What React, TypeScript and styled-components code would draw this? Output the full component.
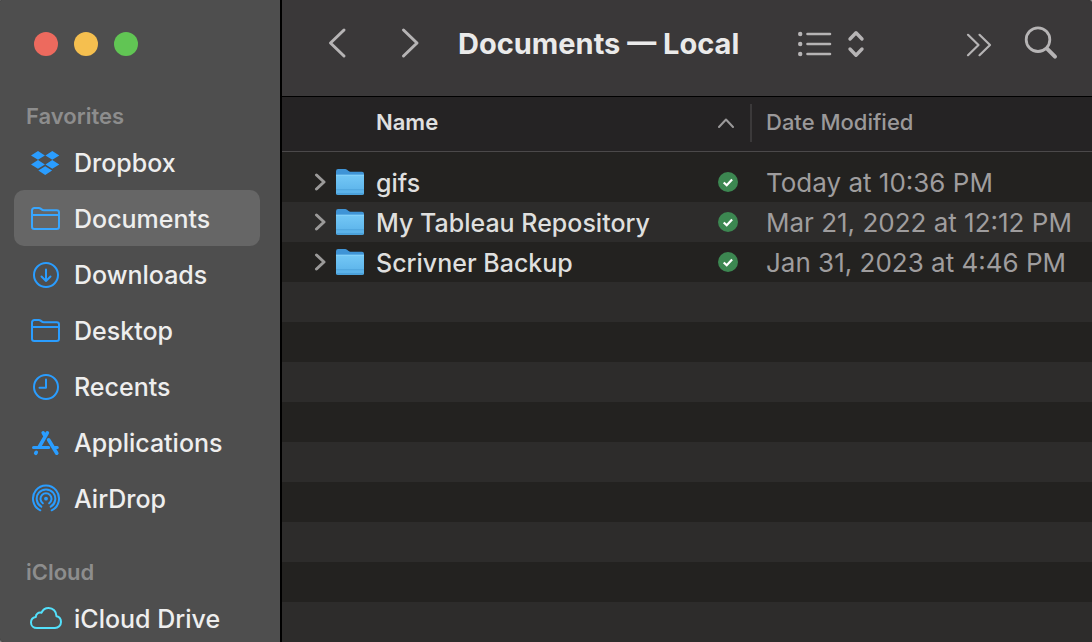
import React from "react";
import styled, { createGlobalStyle } from "styled-components";

const GlobalStyle = createGlobalStyle`
  *, *::before, *::after { box-sizing: border-box; }
  body {
    margin: 0;
    background: #858585;
    font-family: Inter, "Liberation Sans", sans-serif;
    -webkit-font-smoothing: antialiased;
  }
`;

const Window = styled.div`
  display: flex;
  height: 100vh;
  overflow: hidden;
  border-radius: 2px 4px 0 4px;
  background: #232220;
`;

/* Sidebar */

const Sidebar = styled.aside`
  flex: none;
  width: 282px;
  border-right: 2px solid #000;
  background: #4e4e4e;
  overflow: hidden;
`;

const WindowControls = styled.div`
  display: flex;
  gap: 16px;
  padding: 32px 34px;
  height: 98px;
`;

const WindowControl = styled.button<{ $color: string }>`
  width: 24px;
  height: 24px;
  padding: 0;
  border: 0;
  border-radius: 50%;
  background: ${(p) => p.$color};
`;

const Section = styled.section`
  margin-bottom: 28px;
`;

const SectionTitle = styled.h2`
  margin: 0;
  padding-left: 26px;
  font-size: 22px;
  font-weight: 600;
  line-height: 36px;
  color: #8d8d8d;
`;

const PlaceList = styled.ul`
  margin: 0;
  padding: 0 20px 0 14px;
  list-style: none;
`;

const PlaceLink = styled.a<{ $selected: boolean }>`
  display: flex;
  align-items: center;
  gap: 12px;
  height: 56px;
  padding-left: 16px;
  border-radius: 10px;
  background: ${(p) => (p.$selected ? "#666666" : "transparent")};
  color: #eeeeee;
  font-size: 25px;
  font-weight: 500;
  line-height: 32px;
  text-decoration: none;
  white-space: nowrap;
`;

const PlaceName = styled.span`
  padding-top: 2px;
`;

const PlaceIcon = styled.svg<{ $color: string }>`
  flex: none;
  width: 32px;
  height: 32px;
  fill: none;
  color: ${(p) => p.$color};
  stroke: currentColor;
  stroke-width: 2;
  stroke-linecap: round;
  stroke-linejoin: round;
`;

/* Main pane */

const Main = styled.main`
  display: flex;
  flex-direction: column;
  flex: 1;
  min-width: 0;
`;

const Toolbar = styled.header`
  display: flex;
  flex: none;
  align-items: center;
  height: 97px;
  padding: 0 32px 10px 42px;
  border-bottom: 1px solid #000;
  background: #3a3839;
`;

const Navigation = styled.div`
  display: flex;
  gap: 46px;
  margin-right: 32px;
`;

const ToolButton = styled.button`
  display: block;
  padding: 0;
  border: 0;
  background: none;
  color: #b6b4b5;
`;

const Glyph = styled.svg<{ $weight: number }>`
  display: block;
  fill: none;
  stroke: currentColor;
  stroke-width: ${(p) => p.$weight};
  stroke-linecap: round;
  stroke-linejoin: round;
`;

const Title = styled.h1`
  flex: 1;
  margin: 0;
  padding-top: 2px;
  color: #eaeaea;
  font-size: 29px;
  font-weight: 700;
  line-height: 36px;
  white-space: nowrap;
`;

const ViewTools = styled.div`
  display: flex;
  margin-right: 98px;
`;

const EndTools = styled.div`
  display: flex;
  align-items: center;
  gap: 30px;
`;

const ListArea = styled.div`
  flex: 1;
  min-height: 0;
  overflow: hidden;
  background: repeating-linear-gradient(
      #232220 0 40px,
      #2d2c2b 40px 80px
    )
    0 65px;
`;

const FileTable = styled.table`
  width: 100%;
  border-collapse: collapse;
  table-layout: fixed;
`;

const DateColumn = styled.col`
  width: 340px;
`;

const HeadRow = styled.tr`
  height: 54px;
  border-bottom: 1px solid #4b494a;
  background: #252324;
`;

const HeadCell = styled.th`
  padding: 0 0 2px;
  text-align: left;
  font-weight: 400;
`;

const HeadButton = styled.button<{ $sorted?: boolean }>`
  display: flex;
  align-items: center;
  justify-content: space-between;
  width: 100%;
  height: 38px;
  padding: ${(p) => (p.$sorted ? "0 16px 2px 94px" : "0 0 2px 14px")};
  border: 0;
  border-right: ${(p) => (p.$sorted ? "2px solid #3b393a" : "0")};
  background: none;
  color: ${(p) => (p.$sorted ? "#e0e0e0" : "#9b999a")};
  font: inherit;
  font-size: 22px;
  font-weight: ${(p) => (p.$sorted ? 600 : 500)};
  line-height: 28px;
  text-align: left;
`;

const SortMark = styled(Glyph)`
  color: #9b999a;
`;

const Spacer = styled.tr`
  height: 11px;
  background: #232220;
`;

const SpacerCell = styled.td`
  padding: 0;
`;

const FileRow = styled.tr`
  height: 40px;
  color: #dfdfde;
  font-size: 25px;
  font-weight: 500;
  line-height: 32px;
  white-space: nowrap;

  &:nth-child(even) { background: #232220; }
  &:nth-child(odd) { background: #2d2c2b; }
`;

const Cell = styled.td`
  padding: 0;
`;

const DateCell = styled(Cell)`
  padding: 2px 0 0 14px;
  color: #9f9d9e;
  font-size: 26px;
  font-weight: 400;
`;

const NameContent = styled.div`
  display: flex;
  align-items: center;
  gap: 10px;
  padding: 0 14px 0 32px;
`;

const DisclosureButton = styled(ToolButton)`
  color: #9b9a99;
`;

const FileName = styled.span`
  flex: 1;
  padding: 2px 0 0 2px;
  overflow: hidden;
  text-overflow: ellipsis;
`;

const BLUE = "#2a9dff";
const CYAN = "#53e0fb";

const folderOutline = (
  <path d="M2 8.3A2.3 2.3 0 0 1 4.3 6h4.5c.8 0 1.3.2 1.8.6l1.3 1c.5.4 1 .6 1.8.6h13A2.3 2.3 0 0 1 29 10.5v14.2a2.3 2.3 0 0 1-2.3 2.3H4.3A2.3 2.3 0 0 1 2 24.7zM2 13h27" />
);

type Place = { name: string; color: string; art: React.ReactNode };

const favorites: Place[] = [
  {
    name: "Dropbox",
    color: BLUE,
    art: (
      <path
        stroke="none"
        fill="currentColor"
        d="M8 5l6.9 4.4L8 13.8 1 9.4zM22.3 5l7 4.4-7 4.4-6.9-4.4zM8 14l6.9 4.4L8 22.8 1 18.4zM22.3 14l7 4.4-7 4.4-6.9-4.4zM15.2 20.2l6.9 4.4-6.9 4.4-6.9-4.4z"
      />
    ),
  },
  { name: "Documents", color: "#38a6ff", art: folderOutline },
  {
    name: "Downloads",
    color: BLUE,
    art: (
      <>
        <circle cx="16" cy="17" r="12" />
        <path d="M16 11.5V23M11.5 18.5L16 23l4.5-4.5" />
      </>
    ),
  },
  { name: "Desktop", color: BLUE, art: folderOutline },
  {
    name: "Recents",
    color: BLUE,
    art: (
      <>
        <circle cx="16" cy="17" r="12" />
        <path d="M16 9.5v8.2H9.5" />
      </>
    ),
  },
  {
    name: "Applications",
    color: BLUE,
    art: (
      <>
        <path
          strokeWidth="3.6"
          d="M17.3 6.9L9.2 21M13.2 6.9l1.6 2.6M18.6 13.8l8.2 13.4M6.3 26.3l-.6 1"
        />
        <path strokeWidth="3.2" d="M3.6 21.5h15M25 21.5h2.2" />
      </>
    ),
  },
  {
    name: "AirDrop",
    color: BLUE,
    art: (
      <>
        <path d="M10.3 28.3a13 13 0 1 1 11.4 0M11.3 24.7a9.3 9.3 0 1 1 9.4 0M12.8 21.3a5.5 5.5 0 1 1 6.4 0" />
        <circle cx="16" cy="16.7" r="1.9" fill="currentColor" stroke="none" />
      </>
    ),
  },
];

const cloudPlaces: Place[] = [
  {
    name: "iCloud Drive",
    color: CYAN,
    art: (
      <path d="M7 26C3.5 26 1 23.6 1 20.4c0-2.8 2-5 4.8-5.4 0-3 2.6-5 5.6-4.2C12.8 7.8 15.4 6 18.6 6c4.4 0 7.8 3.3 7.9 8.2 2.7.6 4.5 2.9 4.5 5.8 0 3.5-2.7 6-6 6z" />
    ),
  },
];

const files = [
  { name: "gifs", modified: "Today at 10:36 PM" },
  { name: "My Tableau Repository", modified: "Mar 21, 2022 at 12:12 PM" },
  { name: "Scrivner Backup", modified: "Jan 31, 2023 at 4:46 PM" },
];

function Places({ title, places, current }: { title: string; places: Place[]; current?: string }) {
  return (
    <Section>
      <SectionTitle>{title}</SectionTitle>
      <PlaceList>
        {places.map((place) => (
          <li key={place.name}>
            <PlaceLink
              href="#"
              $selected={place.name === current}
              aria-current={place.name === current ? "page" : undefined}
            >
              <PlaceIcon $color={place.color} viewBox="0 0 32 32" aria-hidden="true">
                {place.art}
              </PlaceIcon>
              <PlaceName>{place.name}</PlaceName>
            </PlaceLink>
          </li>
        ))}
      </PlaceList>
    </Section>
  );
}

function FolderIcon() {
  return (
    <svg width="28" height="28" viewBox="0 0 28 28" aria-hidden="true">
      <path d="M0 3.2Q0 1 2 1h7.2q1 0 1.8.7l1.6 1.4q.8.7 1.8.7H26q2 0 2 2V25H0z" fill="#3f94d6" />
      <path d="M0 6.8h28v18.4q0 1.8-1.8 1.8H1.8Q0 27 0 25.2z" fill="url(#folder-front)" />
      <path d="M0 7.3h28" stroke="#86d3fa" />
      <path d="M0 21.8h28" stroke="#4da3dc" />
      <path d="M.5 26h27" stroke="#3f93cd" />
    </svg>
  );
}

function SyncedBadge() {
  return (
    <svg width="20" height="20" viewBox="0 0 20 20" role="img" aria-label="Synced">
      <circle cx="10" cy="10" r="10" fill="#3c8751" />
      <path
        d="M5.7 10.5l3 2.8 5.4-5.9"
        fill="none"
        stroke="#fff"
        strokeWidth="2.2"
      />
    </svg>
  );
}

function SharedGradients() {
  return (
    <svg width="0" height="0" display="block" aria-hidden="true">
      <linearGradient id="folder-front" x1="0" y1="0" x2="0" y2="1">
        <stop offset="0" stopColor="#74c8f6" />
        <stop offset="1" stopColor="#58b0e8" />
      </linearGradient>
    </svg>
  );
}

export default function App() {
  return (
    <>
      <GlobalStyle />
      <Window>
        <Sidebar>
          <WindowControls>
            <WindowControl $color="#ed6a5e" aria-label="Close" />
            <WindowControl $color="#f5bf4f" aria-label="Minimize" />
            <WindowControl $color="#61c554" aria-label="Zoom" />
          </WindowControls>
          <nav>
            <Places title="Favorites" places={favorites} current="Documents" />
            <Places title="iCloud" places={cloudPlaces} />
          </nav>
        </Sidebar>
        <Main>
          <Toolbar>
            <Navigation>
              <ToolButton aria-label="Back">
                <Glyph $weight={3} width="28" height="36" viewBox="0 0 28 36">
                  <path d="M20 5L6.5 18 20 31" />
                </Glyph>
              </ToolButton>
              <ToolButton aria-label="Forward">
                <Glyph $weight={3} width="28" height="36" viewBox="0 0 28 36">
                  <path d="M5.5 5L19 18 5.5 31" />
                </Glyph>
              </ToolButton>
            </Navigation>
            <Title>Documents — Local</Title>
            <ViewTools>
              <ToolButton aria-label="View as list">
                <Glyph $weight={2.6} width="72" height="36" viewBox="0 0 72 36">
                  <path d="M11.5 9h22.5M11.5 19h22.5M11.5 29h22.5" />
                  <path strokeWidth="4.4" d="M4.2 9h.01M4.2 19h.01M4.2 29h.01" />
                  <path strokeWidth="3.4" d="M54 14l6-6.2 6 6.2M54 24l6 6.2 6-6.2" />
                </Glyph>
              </ToolButton>
            </ViewTools>
            <EndTools>
              <ToolButton aria-label="More toolbar items">
                <Glyph $weight={2.2} width="28" height="36" viewBox="0 0 28 36">
                  <path d="M2 9.8L12.5 20 2 30.2M13.5 9.8L24 20 13.5 30.2" />
                </Glyph>
              </ToolButton>
              <ToolButton aria-label="Search">
                <Glyph $weight={2.8} width="36" height="36" viewBox="0 0 36 36">
                  <circle cx="14" cy="14.7" r="11.8" />
                  <path strokeWidth="4" d="M23 23.7l8 8" />
                </Glyph>
              </ToolButton>
            </EndTools>
          </Toolbar>
          <ListArea>
            <SharedGradients />
            <FileTable>
              <colgroup>
                <col />
                <DateColumn />
              </colgroup>
              <thead>
                <HeadRow>
                  <HeadCell scope="col" aria-sort="ascending">
                    <HeadButton $sorted>
                      Name
                      <SortMark $weight={2} width="16" height="16" viewBox="0 0 16 16">
                        <path d="M1 13l7-7.5 7 7.5" />
                      </SortMark>
                    </HeadButton>
                  </HeadCell>
                  <HeadCell scope="col">
                    <HeadButton>Date Modified</HeadButton>
                  </HeadCell>
                </HeadRow>
              </thead>
              <tbody>
                <Spacer>
                  <SpacerCell colSpan={2} />
                </Spacer>
                {files.map((file) => (
                  <FileRow key={file.name}>
                    <Cell>
                      <NameContent>
                        <DisclosureButton aria-label={`Expand ${file.name}`}>
                          <Glyph $weight={3} width="12" height="20" viewBox="0 0 12 20">
                            <path d="M2.5 3L10 10l-7.5 7" />
                          </Glyph>
                        </DisclosureButton>
                        <FolderIcon />
                        <FileName>{file.name}</FileName>
                        <SyncedBadge />
                      </NameContent>
                    </Cell>
                    <DateCell>{file.modified}</DateCell>
                  </FileRow>
                ))}
              </tbody>
            </FileTable>
          </ListArea>
        </Main>
      </Window>
    </>
  );
}
